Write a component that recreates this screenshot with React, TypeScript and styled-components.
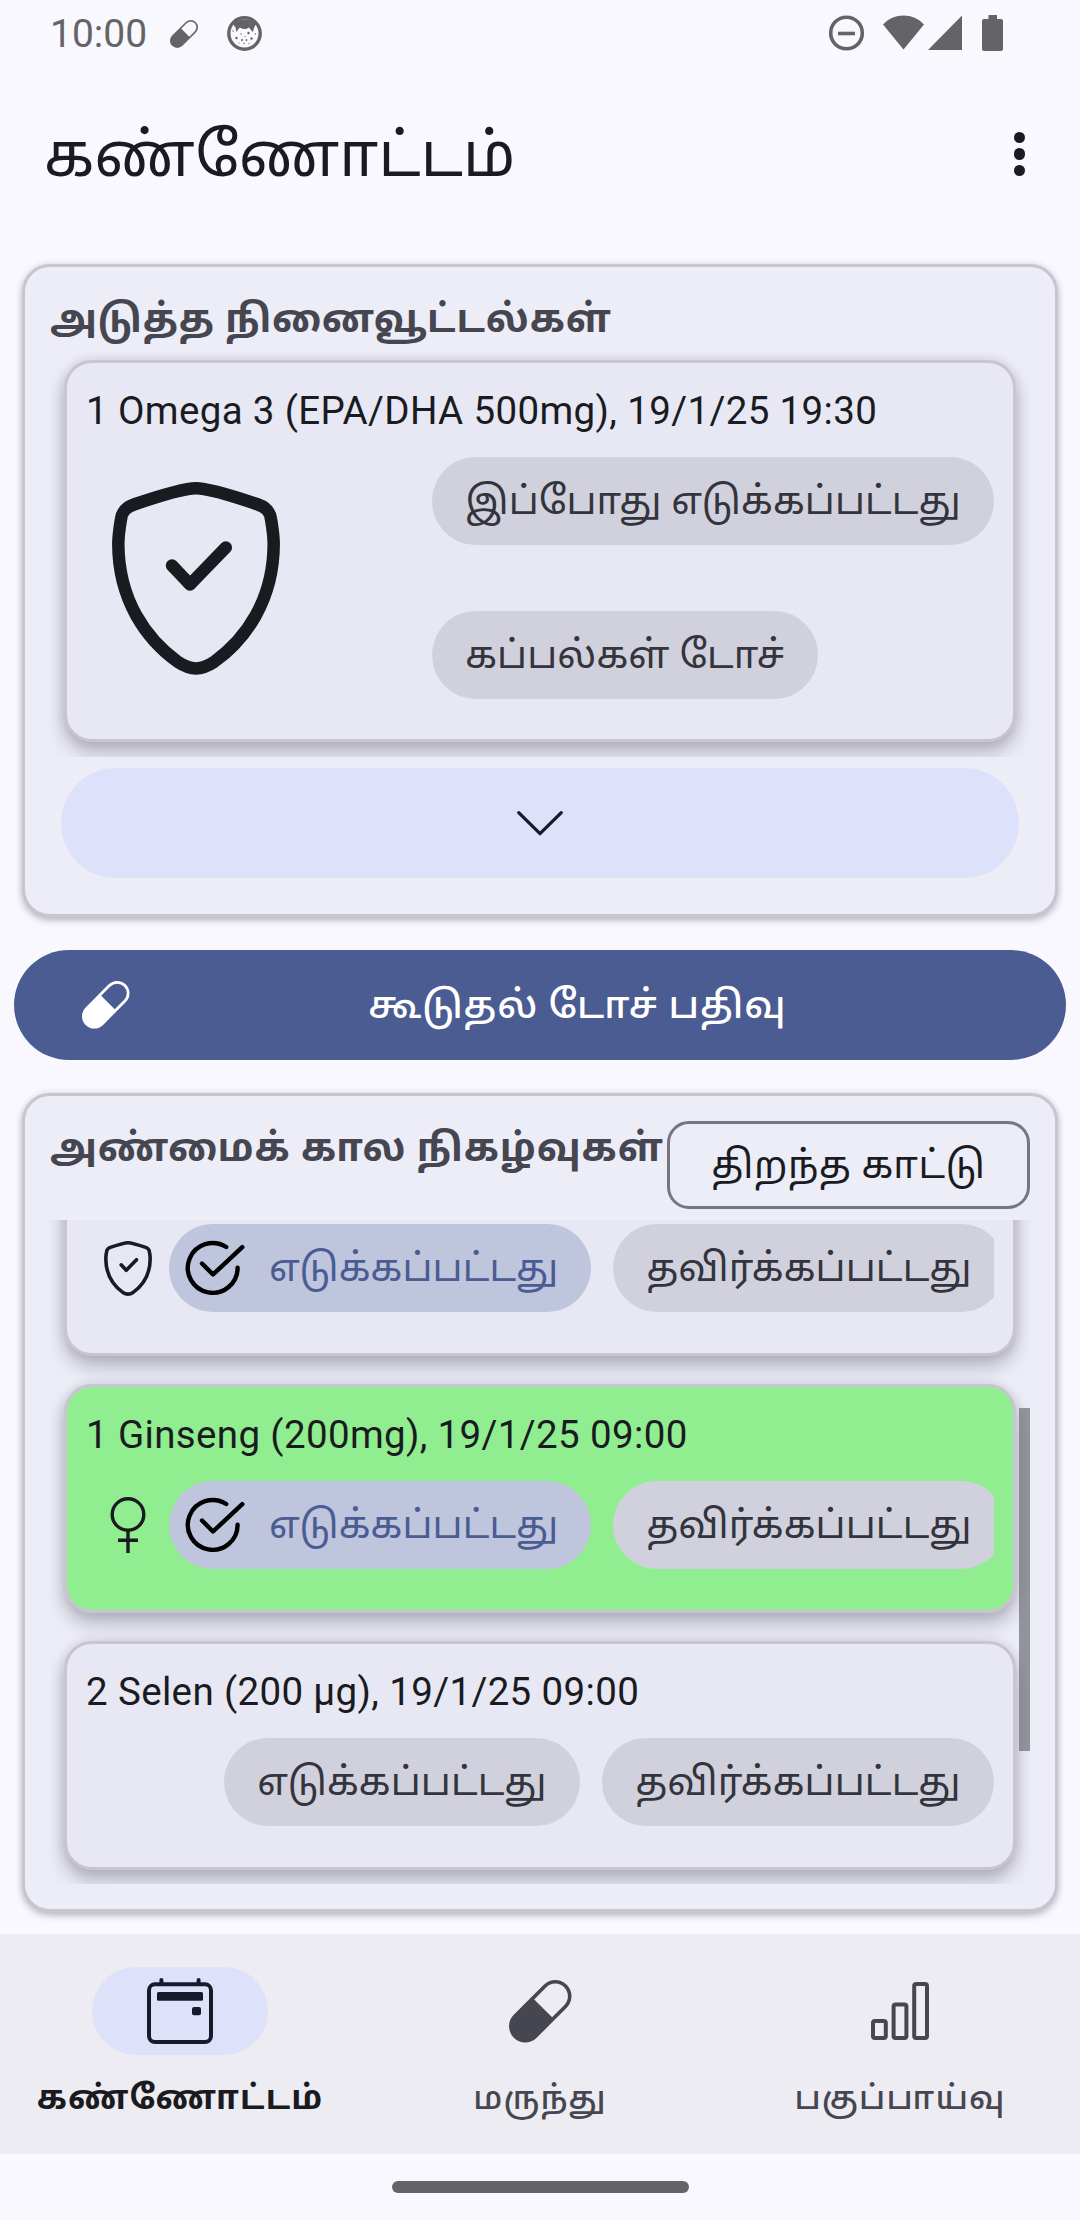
import React from "react";
import styled, { createGlobalStyle, css } from "styled-components";

const GlobalStyle = createGlobalStyle`
  * { box-sizing: border-box; }
  body { margin: 0; background: #f9f8ff; }
`;

const Screen = styled.div`
  width: 1080px;
  height: 2220px;
  display: flex;
  flex-direction: column;
  overflow: hidden;
  background: #f9f8ff;
  color: #1a1b20;
  font-family: Roboto, "Noto Sans Tamil", "Noto Sans", sans-serif;
`;

const StatusBar = styled.div`
  display: flex;
  align-items: flex-start;
  height: 66px;
  padding: 15px 77px 0 50px;
  color: #646466;
`;

const Clock = styled.span`
  width: 120px;
  font-size: 39px;
  line-height: 40px;
`;

const StatusLeft = styled.div`
  display: flex;
  flex: 1;
  gap: 29px;
  align-items: center;
  height: 37px;
`;

const StatusRight = styled.div`
  display: flex;
  align-items: flex-start;
`;

const Icon = styled.svg<{ $ml?: number }>`
  display: block;
  flex: none;
  overflow: visible;
  margin-left: ${(p) => p.$ml ?? 0}px;
`;

const TopBar = styled.header`
  display: flex;
  justify-content: space-between;
  height: 198px;
  padding: 0 55px 0 44px;
`;

const PageTitle = styled.h1`
  margin: 0;
  padding-top: 43.5px;
  font-size: 61px;
  line-height: 90px;
  font-weight: 400;
  white-space: nowrap;
`;

const MenuDots = styled.div`
  display: flex;
  flex-direction: column;
  gap: 5px;
  padding-top: 65.7px;
`;

const Dot = styled.i`
  width: 11.5px;
  height: 11.5px;
  border-radius: 50%;
  background: #1a1b20;
`;

const Panel = styled.section<{ $h: number }>`
  display: flex;
  flex-direction: column;
  flex: none;
  height: ${(p) => p.$h}px;
  margin: 0 22px;
  padding: 0 25px;
  border: 3px solid #c9c4d0;
  border-radius: 28px;
  background: #ecedf7;
  box-shadow: 0 4px 7px rgba(40, 30, 50, 0.24), 0 0 7px rgba(40, 30, 50, 0.12);
`;

const PanelHead = styled.div<{ $h: number }>`
  display: flex;
  flex: none;
  justify-content: space-between;
  align-items: flex-start;
  height: ${(p) => p.$h}px;
`;

const PanelTitle = styled.h2`
  margin: 0;
  padding-top: 22px;
  font-size: 38.5px;
  line-height: 60px;
  font-weight: 700;
  letter-spacing: 0.85px;
  color: #45464f;
  white-space: nowrap;
`;

const OutlineButton = styled.button`
  flex: none;
  width: 363px;
  height: 88px;
  margin-top: 25px;
  padding: 0;
  border: 3px solid #757680;
  border-radius: 22px;
  background: none;
  color: #1a1b20;
  font: 400 38.5px/80px Roboto, "Noto Sans Tamil", "Noto Sans", sans-serif;
  letter-spacing: 0.6px;
  white-space: nowrap;
`;

const List = styled.div<{ $h: number; $pt?: number }>`
  position: relative;
  display: flex;
  flex-direction: column;
  justify-content: flex-end;
  flex: none;
  gap: 28px;
  height: ${(p) => p.$h}px;
  padding: 0 14px ${(p) => p.$pt ?? 14}px;
  overflow: hidden;
`;

const ScrollThumb = styled.div`
  position: absolute;
  right: 0;
  top: 188px;
  width: 11px;
  height: 343px;
  background: rgba(105, 105, 112, 0.68);
`;

const Card = styled.article<{ $h: number; $done?: boolean }>`
  flex: none;
  height: ${(p) => p.$h}px;
  padding: 19px 19px 0;
  border: 3px solid #c9c4d0;
  border-radius: 28px;
  background: ${(p) => (p.$done ? "#90ee90" : "#e7e8f4")};
  box-shadow: 0 11px 18px rgba(30, 30, 40, 0.26), 0 0 12px rgba(30, 30, 40, 0.12);
`;

const CardTitle = styled.div`
  height: 75px;
  font-size: 38.5px;
  line-height: 58px;
  letter-spacing: 0.36px;
  white-space: nowrap;
`;

const ChipRow = styled.div<{ $end?: boolean }>`
  display: flex;
  align-items: center;
  justify-content: ${(p) => (p.$end ? "flex-end" : "flex-start")};
  gap: 22px;
  height: 88px;
  overflow: hidden;
`;

const LeadIcon = styled.div`
  display: flex;
  flex: none;
  justify-content: center;
  width: 83px;
  margin-right: -22px;
`;

const Reminder = styled.div`
  display: flex;
  justify-content: space-between;
  padding-left: 26px;
`;

const ShieldSlot = styled.div`
  padding-top: 25px;
`;

const ChipColumn = styled.div`
  display: flex;
  flex-direction: column;
  gap: 66px;
  width: 562px;
`;

const Chip = styled.button<{ $w: number; $on?: boolean }>`
  display: flex;
  flex: none;
  align-items: center;
  justify-content: center;
  width: ${(p) => p.$w}px;
  height: 88px;
  padding: 0;
  border: 0;
  border-radius: 44px;
  background: #d1d1dd;
  color: #33343c;
  font: 400 38.5px/80px Roboto, "Noto Sans Tamil", "Noto Sans", sans-serif;
  letter-spacing: 0.15px;
  white-space: nowrap;
  ${(p) =>
    p.$on &&
    css`
      justify-content: flex-start;
      gap: 23px;
      padding-left: 15px;
      background: #bfc5dc;
      color: #4a5c92;
    `}
`;

const ExpandButton = styled.button`
  display: flex;
  flex: none;
  align-items: center;
  justify-content: center;
  height: 110px;
  margin: 11px 11px 0;
  padding: 0;
  border: 0;
  border-radius: 55px;
  background: #dde1f9;
`;

const PrimaryButton = styled.button`
  display: flex;
  flex: none;
  align-items: center;
  height: 110px;
  margin: 33px 14px;
  padding: 0 66px 0 68px;
  border: 0;
  border-radius: 55px;
  background: #4a5c92;
  color: #fff;
  font: 500 38.5px/80px Roboto, "Noto Sans Tamil", "Noto Sans", sans-serif;
  letter-spacing: 0.8px;
`;

const PrimaryLabel = styled.span`
  flex: 1;
  padding-left: 25px;
  text-align: center;
  white-space: nowrap;
`;

const NavBar = styled.nav`
  display: grid;
  grid-template-columns: repeat(3, 1fr);
  flex: none;
  height: 220px;
  margin-top: 22px;
  background: #edecf2;
`;

const NavItem = styled.div<{ $active?: boolean }>`
  display: flex;
  flex-direction: column;
  align-items: center;
  padding-top: 33px;
  color: ${(p) => (p.$active ? "#1a1b20" : "#45464f")};
  font-weight: ${(p) => (p.$active ? 700 : 500)};
`;

const NavPill = styled.div<{ $active?: boolean }>`
  display: flex;
  align-items: center;
  justify-content: center;
  width: 176px;
  height: 88px;
  border-radius: 44px;
  background: ${(p) => (p.$active ? "#dde1f9" : "transparent")};
`;

const NavLabel = styled.span`
  padding-top: 18px;
  font-size: 33px;
  line-height: 50px;
  letter-spacing: 1.15px;
  white-space: nowrap;
`;

const HomeArea = styled.div`
  display: flex;
  justify-content: center;
  padding-top: 27px;
`;

const HomeHandle = styled.div`
  width: 297px;
  height: 12px;
  border-radius: 6px;
  background: #646466;
`;

const PillIcon = ({ size }: { size: number }) => (
  <Icon width={size} height={size} viewBox="0 0 62.4 62.4">
    <path
      transform="rotate(-45 31.2 31.2)"
      fill="currentColor"
      fillRule="evenodd"
      d="M10 15H52.4a16.2 16.2 0 0 1 0 32.4H10a16.2 16.2 0 0 1 0-32.4zM35.3 18.6V43.8H52.4a12.6 12.6 0 0 0 0-25.2z"
    />
  </Icon>
);

const ShieldIcon = ({ w }: { w: number }) => (
  <Icon width={w} height={(w * 192) / 168} viewBox="0 0 168 192" fill="none" stroke="#1a1b20" strokeWidth="12.5" strokeLinejoin="round" strokeLinecap="round">
    <path d="M84 6.3C73 6.3 50 13 22 22.5C13.500 25.500 10 30 9 37C7.500 46 6.300 58 6.300 62C6.500 118 34 157 66 180C79 188.500 89 188.500 102 180C134 157 161.500 118 161.700 62C161.700 58 160.500 46 159 37C158 30 154.500 25.500 146 22.500C118 13 95 6.300 84 6.300z" />
    <path d="M60 83.500L78 102.500L113.800 65.500" />
  </Icon>
);

const FemaleIcon = () => (
  <Icon width={36} height={55} viewBox="0 0 36 55" fill="none" stroke="#1a1b20" strokeWidth="3.4">
    <circle cx="18" cy="16.500" r="15.800" />
    <path d="M18 32.300V55M8 42.300H28" />
  </Icon>
);

const CheckIcon = () => (
  <Icon width={62} height={58} viewBox="0 0 62 58" fill="none" stroke="#000" strokeWidth="4.4" strokeLinecap="round" strokeLinejoin="round">
    <path d="M53.600 28.700A24.900 24.900 0 1 1 42.200 8" />
    <path d="M18 24.500L29 35.500L58.300 8.200" />
  </Icon>
);

const TAKEN = "எடுக்கப்பட்டது";
const SKIPPED = "தவிர்க்கப்பட்டது";

const TakenRow = ({ icon }: { icon: React.ReactNode }) => (
  <ChipRow>
    <LeadIcon>{icon}</LeadIcon>
    <Chip $w={422} $on>
      <CheckIcon />
      {TAKEN}
    </Chip>
    <Chip $w={392}>{SKIPPED}</Chip>
  </ChipRow>
);

export default function App() {
  return (
    <Screen>
      <GlobalStyle />
      <StatusBar>
        <StatusLeft>
          <Clock>10:00</Clock>
          <Icon as="div" $ml={-29}>
            <PillIcon size={28} />
          </Icon>
          <Icon width={35} height={35} viewBox="0 0 35 35">
            <circle cx="17.500" cy="17.500" r="15.700" fill="none" stroke="currentColor" strokeWidth="3.400" />
            <path fill="currentColor" d="M6 8C10 2 25 2 29 8L27 12L26 16L23.500 13.500L22 11.500C19 13.500 16 13.500 13 11.500L11.500 13L9.500 16L8.500 11.500z" />
            <g fill="currentColor">
              <circle cx="9.500" cy="22" r="1.200" />
              <circle cx="21.500" cy="17" r="1.200" />
              <circle cx="24.500" cy="22.500" r="1.200" />
              <circle cx="15" cy="24" r="1" />
              <circle cx="19.500" cy="24" r=".9" />
              <circle cx="14" cy="18" r=".7" />
              <circle cx="6" cy="15" r=".7" />
              <circle cx="17" cy="27.500" r=".7" />
              <circle cx="28.500" cy="18" r=".7" />
              <circle cx="12" cy="27" r=".6" />
              <circle cx="18" cy="20.500" r=".6" />
              <circle cx="22" cy="27.500" r=".6" />
            </g>
          </Icon>
        </StatusLeft>
        <StatusRight>
          <Icon width={35} height={36} viewBox="0 0 35 36" fill="none" stroke="currentColor" strokeWidth="3.600">
            <circle cx="17.500" cy="18" r="15.800" />
            <path d="M9 18.500H26" />
          </Icon>
          <Icon width={41} height={36} viewBox="0 0 41 36" $ml={19}>
            <path fill="currentColor" d="M0 9.500C11-2.500 30-2.500 41 9.500L20.500 34.500z" />
          </Icon>
          <Icon width={34} height={36} viewBox="0 0 34 36" $ml={4}>
            <path fill="currentColor" d="M34 .5V35H0z" />
          </Icon>
          <Icon width={21} height={36} viewBox="0 0 21 36" $ml={20}>
            <path fill="currentColor" d="M6.500 0H15V4H19a2 2 0 0 1 2 2V34a2 2 0 0 1-2 2H2a2 2 0 0 1-2-2V6a2 2 0 0 1 2-2H6.500z" />
          </Icon>
        </StatusRight>
      </StatusBar>

      <TopBar>
        <PageTitle>கண்ணோட்டம்</PageTitle>
        <MenuDots>
          <Dot />
          <Dot />
          <Dot />
        </MenuDots>
      </TopBar>

      <Panel $h={653}>
        <PanelHead $h={79}>
          <PanelTitle>அடுத்த நினைவூட்டல்கள்</PanelTitle>
        </PanelHead>
        <List $h={411} $pt={15}>
          <Card $h={382}>
            <CardTitle>1 Omega 3 (EPA/DHA 500mg), 19/1/25 19:30</CardTitle>
            <Reminder>
              <ShieldSlot>
                <ShieldIcon w={168} />
              </ShieldSlot>
              <ChipColumn>
                <Chip $w={562}>இப்போது எடுக்கப்பட்டது</Chip>
                <Chip $w={386}>கப்பல்கள் டோச்</Chip>
              </ChipColumn>
            </Reminder>
          </Card>
        </List>
        <ExpandButton>
          <Icon width={46} height={25} viewBox="0 0 46 25" fill="none" stroke="#161b2c" strokeWidth="3.300" strokeLinecap="round" strokeLinejoin="round">
            <path d="M1.700 1.700L23 22.700L44.300 1.700" />
          </Icon>
        </ExpandButton>
      </Panel>

      <PrimaryButton>
        <PillIcon size={47.5} />
        <PrimaryLabel>கூடுதல் டோச் பதிவு</PrimaryLabel>
      </PrimaryButton>

      <Panel $h={819}>
        <PanelHead $h={124}>
          <PanelTitle>அண்மைக் கால நிகழ்வுகள்</PanelTitle>
          <OutlineButton>திறந்த காட்டு</OutlineButton>
        </PanelHead>
        <List $h={664}>
          <Card $h={229}>
            <CardTitle />
            <TakenRow icon={<ShieldIcon w={48} />} />
          </Card>
          <Card $h={229} $done>
            <CardTitle>1 Ginseng (200mg), 19/1/25 09:00</CardTitle>
            <TakenRow icon={<FemaleIcon />} />
          </Card>
          <Card $h={229}>
            <CardTitle>2 Selen (200 µg), 19/1/25 09:00</CardTitle>
            <ChipRow $end>
              <Chip $w={356}>{TAKEN}</Chip>
              <Chip $w={392}>{SKIPPED}</Chip>
            </ChipRow>
          </Card>
          <ScrollThumb />
        </List>
      </Panel>

      <NavBar>
        <NavItem $active>
          <NavPill $active>
            <Icon width={66} height={66} viewBox="0 0 66 66" fill="none" stroke="#161b2c" strokeWidth="4">
              <rect x="2" y="6.300" width="62" height="57.700" rx="6" />
              <path strokeLinecap="round" d="M14.400 2V6M51.600 2V6" />
              <rect x="10" y="14" width="46" height="8.700" rx="1.500" fill="#161b2c" stroke="none" />
              <rect x="45" y="29" width="9" height="8.300" rx="2" fill="#161b2c" stroke="none" />
            </Icon>
          </NavPill>
          <NavLabel>கண்ணோட்டம்</NavLabel>
        </NavItem>
        <NavItem>
          <NavPill>
            <PillIcon size={62.5} />
          </NavPill>
          <NavLabel>மருந்து</NavLabel>
        </NavItem>
        <NavItem>
          <NavPill>
            <Icon width={58} height={58} viewBox="0 0 58 58" fill="none" stroke="currentColor" strokeWidth="4">
              <rect x="2" y="39" width="12.800" height="17" rx="2" />
              <rect x="22.600" y="22.500" width="12.800" height="33.500" rx="2" />
              <rect x="43.200" y="2" width="12.800" height="54" rx="2" />
            </Icon>
          </NavPill>
          <NavLabel>பகுப்பாய்வு</NavLabel>
        </NavItem>
      </NavBar>
      <HomeArea>
        <HomeHandle />
      </HomeArea>
    </Screen>
  );
}
